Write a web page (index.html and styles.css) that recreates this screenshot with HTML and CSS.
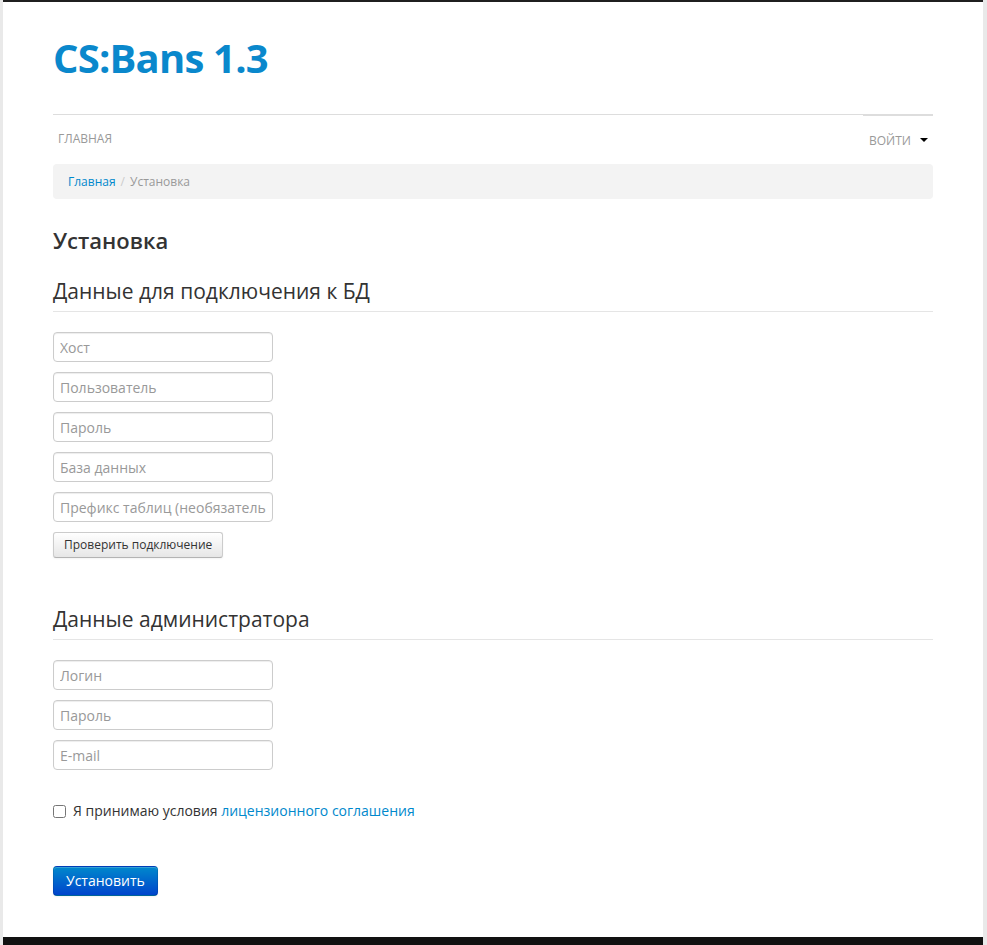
FILE: index.html
```html
<!DOCTYPE html>
<html lang="ru">
<head>
    <meta charset="UTF-8">
    <meta name="viewport" content="width=device-width, initial-scale=1.0">
    <title>CS:Bans 1.3 - Установка</title>
    <link rel="stylesheet" href="styles.css">
</head>
<body>
    <div class="wrapper">
        <div class="header">
            <h1 class="brand">CS:Bans 1.3</h1>
        </div>
        <div class="navbar">
            <a class="nav-link" href="#">Главная</a>
            <a class="nav-link nav-dropdown" href="#">Войти <span class="caret"></span></a>
        </div>
        <ul class="breadcrumb">
            <li><a href="#">Главная</a><span class="divider">/</span></li>
            <li class="active">Установка</li>
        </ul>

        <h3 class="page-title">Установка</h3>

        <form class="install-form">
            <fieldset class="db-set">
                <legend>Данные для подключения к БД</legend>
                <input type="text" placeholder="Хост">
                <input type="text" placeholder="Пользователь">
                <input type="password" placeholder="Пароль">
                <input type="text" placeholder="База данных">
                <input type="text" placeholder="Префикс таблиц (необязательно)">
                <button type="button" class="btn btn-small">Проверить подключение</button>
            </fieldset>

            <fieldset class="admin-set">
                <legend>Данные администратора</legend>
                <input type="text" placeholder="Логин">
                <input type="password" placeholder="Пароль">
                <input type="text" placeholder="E-mail">
            </fieldset>

            <label class="checkbox">
                <input type="checkbox">
                <span>Я принимаю условия <a href="#">лицензионного соглашения</a></span>
            </label>

            <button type="submit" class="btn btn-primary">Установить</button>
        </form>
    </div>
    <div class="footer"></div>
</body>
</html>
```

FILE: styles.css
```css
body {
    margin: 0;
    font-family: "Open Sans", "Noto Sans", sans-serif;
    font-size: 14px;
    line-height: 20px;
    color: #333;
    background-color: #e9e9e9;
}
a {
    color: #0088cc;
    text-decoration: none;
}
.wrapper {
    margin: 0 4px 0 3px;
    padding: 0 50px 41px;
    background: #fff;
    border-top: 2px solid #1f1f1f;
}
.header {
    padding-top: 33px;
    padding-bottom: 34px;
}
.brand {
    margin: 0;
    font-size: 40px;
    line-height: 45px;
    font-weight: 700;
    letter-spacing: -0.8px;
    color: #0a88cc;
}
.navbar {
    display: flex;
    justify-content: space-between;
    align-items: flex-start;
    border-top: 1px solid #ddd;
    padding: 14px 0 15px;
}
.nav-link {
    font-size: 12px;
    line-height: 20px;
    color: #999;
    text-transform: uppercase;
    padding: 0 5px;
}
.nav-dropdown {
    margin-top: -15px;
    padding: 15px 5px 0 6px;
    border-top: 2px solid #ddd;
    height: 18px;
}
.caret {
    display: inline-block;
    width: 0;
    height: 0;
    margin-left: 6px;
    vertical-align: middle;
    border-top: 4px solid #000;
    border-left: 4px solid transparent;
    border-right: 4px solid transparent;
    position: relative;
    top: -2px;
}
.breadcrumb {
    display: flex;
    margin: 0;
    padding: 8px 15px;
    list-style: none;
    background-color: #f3f3f3;
    border-radius: 4px;
    font-size: 12px;
    line-height: 19px;
}
.breadcrumb .divider {
    padding: 0 5px;
    color: #ccc;
}
.breadcrumb .active {
    color: #999;
}
.page-title {
    margin: 26px 0 0;
    font-size: 22px;
    line-height: 30px;
    font-weight: 600;
}
.install-form {
    margin: 0;
}
fieldset {
    margin: 0;
    padding: 0;
    border: 0;
    display: flex;
    flex-direction: column;
    align-items: flex-start;
}
.db-set {
    margin-top: 16px;
}
.admin-set {
    margin-top: 41px;
}
legend {
    display: block;
    width: 100%;
    padding: 0;
    margin: 0 0 20px;
    font-size: 21px;
    line-height: 40px;
    color: #333;
    border-bottom: 1px solid #e5e5e5;
}
input[type="text"],
input[type="password"] {
    box-sizing: border-box;
    width: 220px;
    height: 30px;
    padding: 4px 6px;
    margin: 0 0 10px;
    font-family: inherit;
    font-size: 14px;
    line-height: 20px;
    color: #555;
    background: #fff;
    border: 1px solid #ccc;
    border-radius: 4px;
    box-shadow: inset 0 1px 1px rgba(0,0,0,0.075);
}
input::placeholder {
    color: #999;
}
.btn {
    display: inline-block;
    font-family: inherit;
    cursor: pointer;
    border: 1px solid #ccc;
    border-bottom-color: #b3b3b3;
    border-radius: 4px;
    box-shadow: inset 0 1px 0 rgba(255,255,255,0.2), 0 1px 2px rgba(0,0,0,0.05);
}
.btn-small {
    padding: 2px 10px;
    font-size: 12px;
    line-height: 20px;
    border-radius: 3px;
    color: #333;
    background-image: linear-gradient(to bottom, #fff, #e6e6e6);
}
.checkbox {
    display: flex;
    align-items: center;
    margin-top: 21px;
    font-size: 14px;
    line-height: 20px;
}
.checkbox input {
    width: 13px;
    height: 13px;
    margin: 0 7px 0 0;
}
.btn-primary {
    margin-top: 45px;
    padding: 4px 12px;
    font-size: 14px;
    line-height: 20px;
    color: #fff;
    background-image: linear-gradient(to bottom, #0088cc, #0044cc);
    border-color: rgba(0,0,0,0.1) rgba(0,0,0,0.1) rgba(0,0,0,0.25);
}
.footer {
    margin: 0 4px 0 3px;
    height: 8px;
    background: #111;
}
```
